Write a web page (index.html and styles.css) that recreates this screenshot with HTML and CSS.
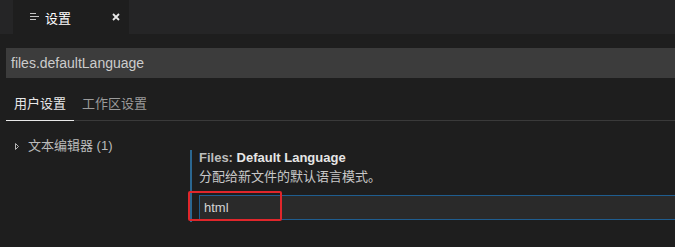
FILE: index.html
```html
<!DOCTYPE html>
<html>
<head>
  <title>设置</title>
  <link rel="stylesheet" href="styles.css">
</head>
<body>

  <div class="tabbar">
    <div class="editor-tab">
      <svg class="tab-icon" width="10" height="10" viewBox="0 0 10 10">
        <path d="M0 1.5h6M0 4.5h9M0 7.5h6" stroke="#c5c5c5" stroke-width="1.2"/>
      </svg>
      <span class="tab-title">设置</span>
      <svg class="tab-close" width="8" height="8" viewBox="0 0 8 8">
        <path d="M1 1L7 7M7 1L1 7" stroke="#e8e8e8" stroke-width="1.8"/>
      </svg>
    </div>
  </div>

  <div class="search">files.defaultLanguage</div>

  <div class="scope-tabs">
    <div class="scope-tab active">用户设置</div>
    <div class="scope-tab">工作区设置</div>
  </div>

  <div class="content">
    <div class="tree">
      <div class="tree-item">
        <svg class="twisty" width="4" height="7" viewBox="0 0 4 7">
          <path d="M0.5 0.5L3.5 3.5L0.5 6.5Z" fill="none" stroke="#b5b5b5" stroke-width="1"/>
        </svg>
        <span>文本编辑器 (1)</span>
      </div>
    </div>

    <div class="setting">
      <div class="setting-title"><span class="category">Files: </span>Default Language</div>
      <div class="setting-desc">分配给新文件的默认语言模式。</div>
      <div class="setting-value">
        <div class="value-input">html</div>
        <!-- annotation box from the screenshot -->
        <div class="highlight"></div>
      </div>
    </div>
  </div>

</body>
</html>
```

FILE: styles.css
```css
body {
  margin: 0;
  height: 247px;
  overflow: hidden;
  background: #1e1e1e;
  font-family: "Liberation Sans", "Noto Sans CJK SC", sans-serif;
  font-size: 13px;
  color: #cccccc;
}

.tabbar {
  height: 34px;
  background: #252526;
  padding-left: 13px;
  display: flex;
}

.editor-tab {
  width: 116px;
  background: #1e1e1e;
  display: flex;
  align-items: center;
  padding-left: 17px;
  box-sizing: border-box;
}

.tab-icon {
  margin-right: 5px;
}

.tab-title {
  color: #ffffff;
  font-size: 13px;
  flex: 1;
}

.tab-close {
  margin-right: 9px;
}

.search {
  margin: 14px 0 0 6px;
  height: 30px;
  line-height: 30px;
  background: #3c3c3c;
  padding-left: 5px;
  font-size: 14px;
  color: #cccccc;
}

.scope-tabs {
  display: flex;
  margin-left: 6px;
  border-bottom: 1px solid #3a3a3a;
}

.scope-tab {
  padding: 17px 8px 7px;
  line-height: 18px;
  margin-bottom: -1px;
  border-bottom: 1px solid transparent;
  color: #9b9b9b;
}

.scope-tab.active {
  color: #e8e8e8;
  border-bottom-color: #e8e8e8;
}

.content {
  display: flex;
}

.tree {
  width: 190px;
  flex-shrink: 0;
  padding-top: 16px;
}

.tree-item {
  display: flex;
  align-items: center;
  padding-left: 15px;
  line-height: 18px;
  color: #bbbbbb;
  white-space: nowrap;
}

.twisty {
  margin-right: 9px;
}

.setting {
  flex: 1;
  min-width: 0;
  margin-top: 29px;
  border-left: 2px solid #2b6791;
  padding: 0 0 2px 7px;
}

.setting-title {
  line-height: 16px;
  font-weight: bold;
  color: #e6e6e6;
}

.setting-title .category {
  color: #bdbdbd;
}

.setting-desc {
  margin-top: 3px;
  line-height: 16px;
  color: #c8c8c8;
}

.setting-value {
  position: relative;
  margin-top: 10px;
}

.value-input {
  height: 23px;
  line-height: 23px;
  background: #2a2a2a;
  border: 1px solid #1f5d8f;
  border-right: none;
  padding-left: 4px;
  color: #d4d4d4;
}

.highlight {
  position: absolute;
  left: -11px;
  top: -4px;
  width: 90px;
  height: 26px;
  border: 2px solid #e0262b;
  border-radius: 2px;
}
```
